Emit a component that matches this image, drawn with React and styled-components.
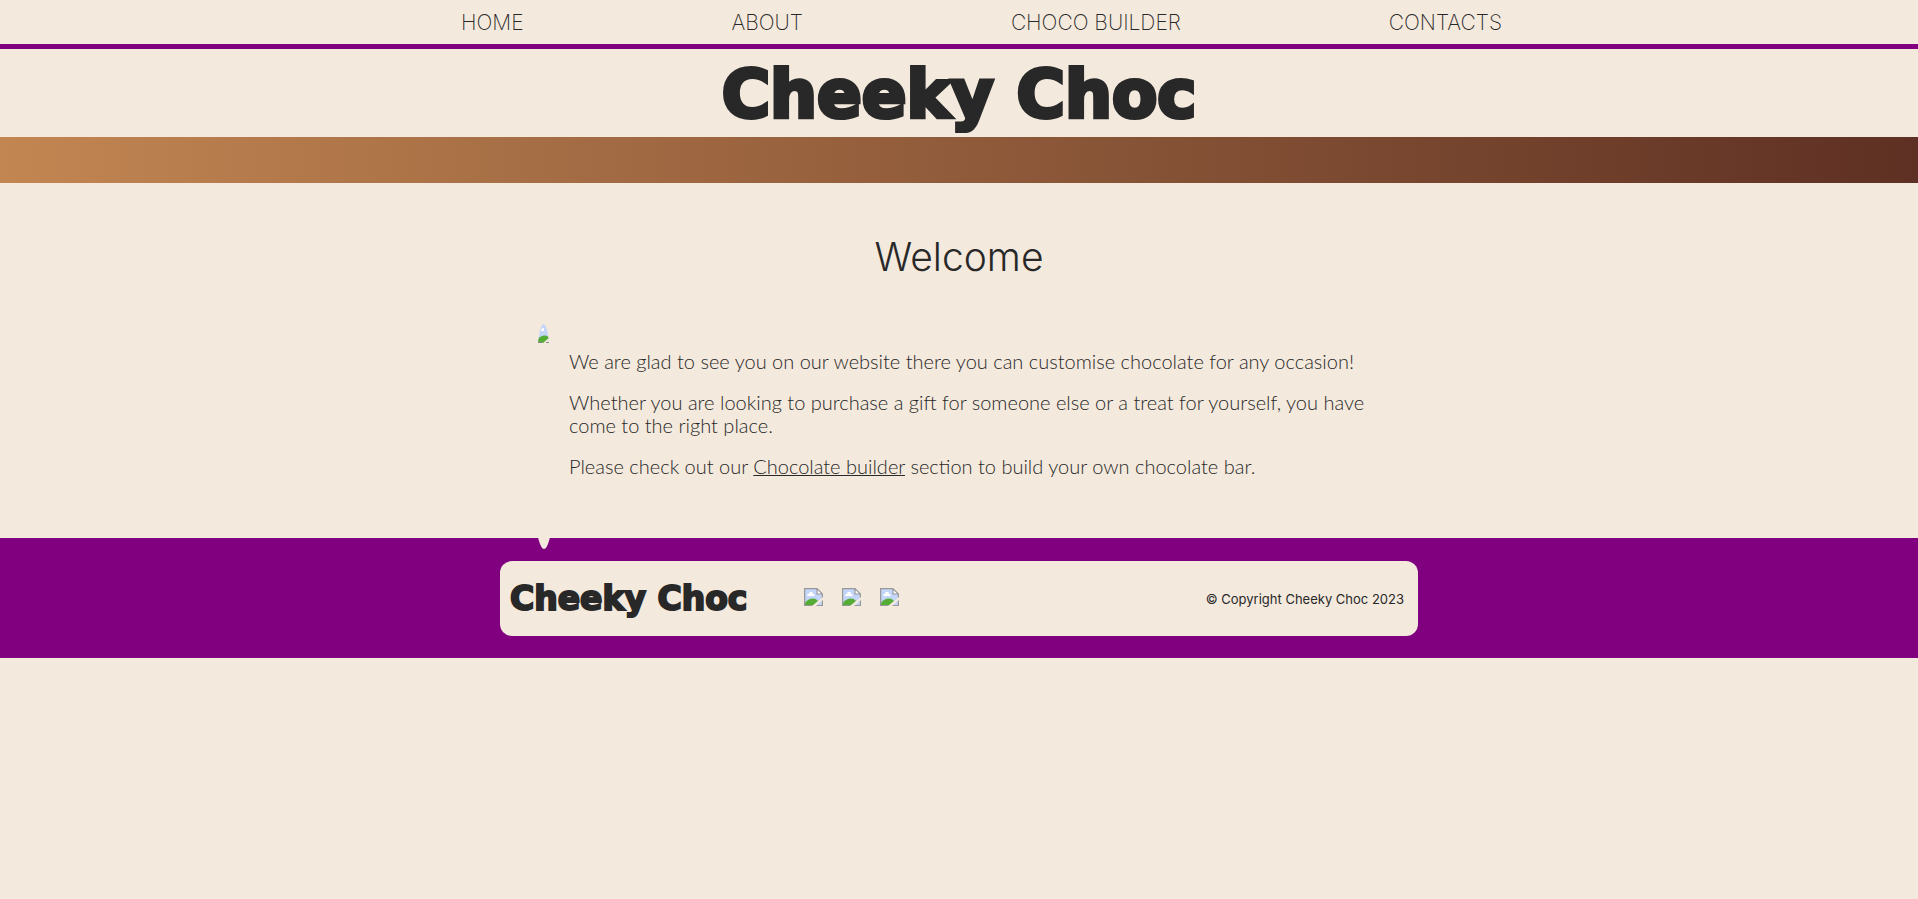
import React from "react";
import styled, { createGlobalStyle } from "styled-components";

const GlobalStyle = createGlobalStyle`
  * { box-sizing: border-box; }
  body {
    margin: 0;
    background: #f4e9dd;
    color: #282828;
    font-family: Inter, "Open Sans", sans-serif;
    font-weight: 200;
  }
`;

const Nav = styled.nav`
  border-bottom: 5px solid #800080;
`;

const NavList = styled.ul`
  display: flex;
  justify-content: space-between;
  align-items: center;
  max-width: 1086px;
  height: 44px;
  margin: 0 auto;
  padding: 2px 0 0 45px;
  list-style: none;
`;

const NavLink = styled.a`
  color: inherit;
  font-size: 21px;
  line-height: 24px;
  text-decoration: none;
  text-transform: uppercase;
`;

const Brand = styled.span`
  display: block;
  font-family: "DejaVu Sans", sans-serif;
  font-weight: 700;
  font-size: ${(p) => (p.$large ? 66 : 33)}px;
  line-height: ${(p) => (p.$large ? 84 : 40)}px;
  -webkit-text-stroke: ${(p) => (p.$large ? 4 : 2)}px #282828;
  white-space: nowrap;
`;

const Title = styled.h1`
  margin: 0;
  padding-top: 4px;
  display: flex;
  justify-content: center;
`;

const Ribbon = styled.div`
  height: 46px;
  background: linear-gradient(to right, #c28652, #5e3023);
`;

const Heading = styled.h2`
  margin: 49px 0 47px;
  text-align: center;
  font-size: 39px;
  font-weight: 300;
  line-height: 50px;
`;

const Intro = styled.section`
  display: flex;
  gap: 11px;
  width: 858px;
  max-width: 100%;
  margin: -20px auto 0;
`;

const Photo = styled.div`
  position: relative;
  z-index: 1;
  flex: none;
  width: 28px;
  height: 240px;
  margin-bottom: -11px;
  padding: 15px 8px;
  border-radius: 50%;
  background: #f4e9dd;
`;

const Copy = styled.div`
  padding: 41px 16px 0 0;
  font-family: Lato, sans-serif;
  font-weight: 300;
  font-size: 20px;
  line-height: 23px;

  p { margin: 0 0 18px; }
  a {
    color: inherit;
    text-decoration-thickness: 1px;
  }
`;

const Footer = styled.footer`
  padding: 23px 20px 22px;
  background: #800080;
`;

const FooterCard = styled.div`
  display: flex;
  align-items: center;
  width: 918px;
  max-width: 100%;
  height: 75px;
  margin: 0 auto;
  padding: 0 14px 0 10px;
  border-radius: 12px;
  background: #f4e9dd;
`;

const Socials = styled.div`
  display: flex;
  gap: 19px;
  margin-left: 57px;
  padding-bottom: 3px;

  a { display: flex; }
`;

const Copyright = styled.small`
  margin-left: auto;
  font-size: 13px;
  font-weight: 400;
  line-height: 18px;
`;

const ImageIcon = () => (
  <svg width="19" height="18" viewBox="0 0 19 18" aria-hidden="true">
    <path d="M1 1H13L18 6V17H1Z" fill="#c3d5f8" />
    <path d="M3 8C3 6 5 6 5 6C5 3 9 3 9 6C11 6 11 8 10 8Z" fill="#fff" />
    <path d="M1 17V15C4 10 11 9 14 13L10 17Z" fill="#56ad35" />
    <path d="M13 1V6H18Z" fill="#fff" />
    <path d="M.6 17.5V.6H13L18.4 6V17.5ZM13 1V6H18" fill="none" stroke="#989898" strokeWidth="1.2" />
    <path d="M8 18L19 9V12L12 18Z" fill="#f4e9dd" />
  </svg>
);

const PhotoIcon = () => (
  <svg width="12" height="19" viewBox="0 0 12 19" aria-hidden="true">
    <clipPath id="oval"><path d="M0 19C1 10 3 0 5.5 0S10 9 11 19Z" /></clipPath>
    <g clipPath="url(#oval)">
      <path d="M0 0H12V19H0Z" fill="#c3d5f8" />
      <path d="M3 7C3 5 4 4 6 4V7Z" fill="#fff" />
      <path d="M0 19V15C3 11 8 10 12 14L6 19Z" fill="#56ad35" />
      <path d="M5 19L12 13V19Z" fill="#f4e9dd" />
      <path d="M0 18.5H4M8 18.5H12" stroke="#888" />
    </g>
  </svg>
);

const links = ["Home", "About", "Choco builder", "Contacts"];
const socials = ["Facebook", "Instagram", "Twitter"];

export default function App() {
  return (
    <>
      <GlobalStyle />
      <Nav>
        <NavList>
          {links.map((l) => (
            <li key={l}><NavLink href="#">{l}</NavLink></li>
          ))}
        </NavList>
      </Nav>
      <Title><Brand $large>Cheeky Choc</Brand></Title>
      <Ribbon />
      <main>
        <Heading>Welcome</Heading>
        <Intro>
          <Photo><PhotoIcon /></Photo>
          <Copy>
            <p>We are glad to see you on our website there you can customise chocolate for any occasion!</p>
            <p>Whether you are looking to purchase a gift for someone else or a treat for yourself, you have come to the right place.</p>
            <p>Please check out our <a href="#">Chocolate builder</a> section to build your own chocolate bar.</p>
          </Copy>
        </Intro>
      </main>
      <Footer>
        <FooterCard>
          <Brand>Cheeky Choc</Brand>
          <Socials>
            {socials.map((s) => (
              <a key={s} href="#" aria-label={s}><ImageIcon /></a>
            ))}
          </Socials>
          <Copyright>© Copyright Cheeky Choc 2023</Copyright>
        </FooterCard>
      </Footer>
    </>
  );
}
